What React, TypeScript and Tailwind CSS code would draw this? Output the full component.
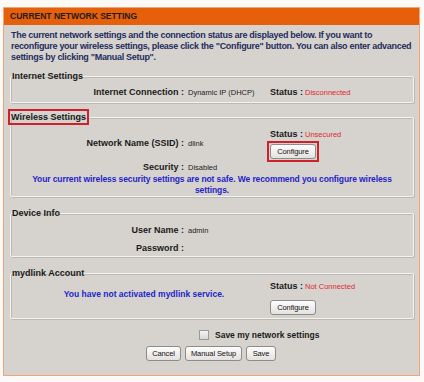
import React from "react";

const font = { fontFamily: '"Liberation Sans", Arial, sans-serif' };

function Btn({ children, w, red }: { children: React.ReactNode; w: string; red?: boolean }) {
  const b = (
    <button
      className={
        "h-[15px] rounded-[3px] border border-[#8c8c8c] bg-gradient-to-b from-[#fdfdfd] to-[#e4e2df] text-[7.5px] leading-[13px] text-[#111] tracking-[-0.1px] " +
        w
      }
    >
      {children}
    </button>
  );
  if (red) return <div className="border-2 border-[#d0202a] p-[1px] flex">{b}</div>;
  return b;
}

function Field({ legend, redLegend, children }: { legend: string; redLegend?: boolean; children: React.ReactNode }) {
  return (
    <fieldset className="ml-[6px] mr-[5px] border border-[#f3f2f0] shadow-[inset_1px_1px_0_#bcb9b5,1px_1px_0_#bcb9b5] rounded-[2px]">
      <legend
        className={
          "text-[9px] font-bold text-[#1a1a1a] " +
          (redLegend ? "border-2 border-[#d0202a] px-[1px] leading-[12px] -ml-[3px]" : "leading-[12px] ml-[1px]")
        }
      >
        {legend}
      </legend>
      {children}
    </fieldset>
  );
}

const lbl = "w-[173px] text-right font-bold text-[9px] text-[#1a1a1a] leading-[10px] whitespace-nowrap";
const val = "pl-[4px] text-[7.5px] text-[#222] leading-[10px] whitespace-nowrap";
const stat = "font-bold text-[9px] text-[#1a1a1a] leading-[10px] whitespace-nowrap";
const red = "pl-[2px] text-[7.5px] text-[#e2262b] leading-[10px] whitespace-nowrap";

export default function App() {
  return (
    <div style={font} className="w-[424px] h-[382px] bg-[#fdf9f6] pt-[7px] px-[3px]">
      <div className="w-[417px] h-[369px] border border-[#eaa77c] bg-[#d6d3cf] flex flex-col">
        <div className="h-[17px] bg-[#e6600b] flex items-center pl-[6px] text-[8.5px] font-bold text-[#1b1b1b] whitespace-nowrap">
          CURRENT NETWORK SETTING
        </div>
        <p className="px-[7px] pt-[5px] text-[9px] leading-[11px] font-bold text-[#1f2d5c] tracking-[-0.3px] whitespace-nowrap">
          The current network settings and the connection status are displayed below. If you want to
          <br />
          reconfigure your wireless settings, please click the "Configure" button. You can also enter advanced
          <br />
          settings by clicking "Manual Setup".
        </p>

        <div className="mt-[7px]">
          <Field legend="Internet Settings">
            <div className="flex items-baseline h-[20px] pt-[5px]">
              <div className={lbl}>Internet Connection :</div>
              <div className={val + " w-[86px]"}>Dynamic IP (DHCP)</div>
              <div className={stat}>Status :</div>
              <div className={red}>Disconnected</div>
            </div>
          </Field>
        </div>

        <div className="mt-[6px]">
          <Field legend="Wireless Settings" redLegend>
            <div className="flex h-[32px]">
              <div className="flex items-baseline w-[259px] pt-[13px]">
                <div className={lbl}>Network Name (SSID) :</div>
                <div className={val}>dlink</div>
              </div>
              <div className="flex flex-col items-start pt-[4px]">
                <div className="flex items-baseline">
                  <div className={stat}>Status :</div>
                  <div className={red}>Unsecured</div>
                </div>
                <div className="-ml-[3px] mt-[1px]">
                  <Btn red w="w-[46px]">Configure</Btn>
                </div>
              </div>
            </div>
            <div className="flex items-baseline mt-[5px]">
              <div className={lbl}>Security :</div>
              <div className={val}>Disabled</div>
            </div>
            <p className="text-center text-[8.5px] leading-[11px] font-bold text-[#2424c8] mt-[1px] tracking-[-0.1px] whitespace-nowrap">
              Your current wireless security settings are not safe. We recommend you configure wireless
              <br />
              settings.
            </p>
          </Field>
        </div>

        <div className="mt-[10px]">
          <Field legend="Device Info">
            <div className="pb-[3px]">
              <div className="flex items-baseline mt-[6px]">
                <div className={lbl}>User Name :</div>
                <div className={val}>admin</div>
              </div>
              <div className="flex items-baseline mt-[7px]">
                <div className={lbl}>Password :</div>
                <div className={val}></div>
              </div>
            </div>
          </Field>
        </div>

        <div className="mt-[10px]">
          <Field legend="mydlink Account">
            <div className="flex pb-[1px]">
              <div className="w-[259px] flex justify-center items-start pt-[10px] pl-[7px]">
                <span className="text-[8.5px] leading-[10px] font-bold text-[#2424c8] whitespace-nowrap">
                  You have not activated mydlink service.
                </span>
              </div>
              <div className="flex flex-col items-start pt-[2px]">
                <div className="flex items-baseline">
                  <div className={stat}>Status :</div>
                  <div className={red}>Not Connected</div>
                </div>
                <div className="mt-[1px]">
                  <Btn w="w-[46px]">Configure</Btn>
                </div>
              </div>
            </div>
          </Field>
        </div>

        <div className="flex items-center mt-[10px] h-[12px] pl-[195px] gap-[6px]">
          <div className="w-[10px] h-[10px] border border-[#9a9a9a] bg-gradient-to-b from-[#f4f4f4] to-[#d8d8d8]" />
          <span className="text-[8.5px] leading-[10px] font-bold text-[#1a1a1a] whitespace-nowrap">Save my network settings</span>
        </div>
        <div className="flex gap-[4px] mt-[5px] pl-[142px]">
          <Btn w="w-[35px]">Cancel</Btn>
          <Btn w="w-[57px]">Manual Setup</Btn>
          <Btn w="w-[30px]">Save</Btn>
        </div>
      </div>
    </div>
  );
}
